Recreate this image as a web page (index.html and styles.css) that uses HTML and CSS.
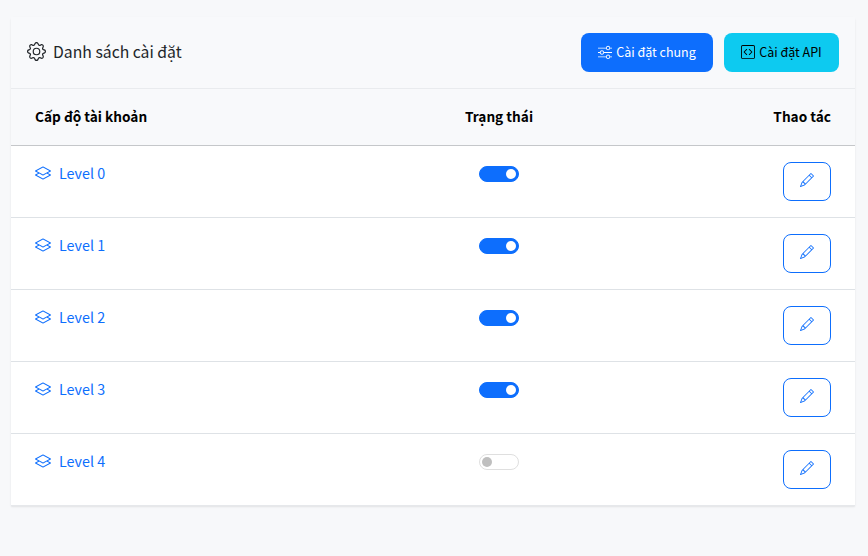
FILE: index.html
```html
<!DOCTYPE html>
<html lang="vi">
<head>
<meta charset="utf-8">
<title>Danh sách cài đặt</title>
<link rel="stylesheet" href="styles.css">
</head>
<body>
<svg class="defs" width="0" height="0" aria-hidden="true">
  <symbol id="i-layers" viewBox="0 0 16 16"><path d="M8.235 1.559a.5.5 0 0 0-.47 0l-7.5 4a.5.5 0 0 0 0 .882L3.188 8 .264 9.559a.5.5 0 0 0 0 .882l7.5 4a.5.5 0 0 0 .47 0l7.5-4a.5.5 0 0 0 0-.882L12.813 8l2.922-1.559a.5.5 0 0 0 0-.882zm3.515 7.008L14.438 10 8 13.433 1.562 10 4.25 8.567l3.515 1.874a.5.5 0 0 0 .47 0zM8 9.433 1.562 6 8 2.567 14.438 6z"/></symbol>
  <symbol id="i-pencil" viewBox="0 0 16 16"><path d="M12.146.146a.5.5 0 0 1 .708 0l3 3a.5.5 0 0 1 0 .708l-10 10a.5.5 0 0 1-.168.11l-5 2a.5.5 0 0 1-.65-.65l2-5a.5.5 0 0 1 .11-.168zM11.207 2.5 13.5 4.793 14.793 3.5 12.5 1.207zm1.586 3L10.5 3.207 4 9.707V10h.5a.5.5 0 0 1 .5.5v.5h.5a.5.5 0 0 1 .5.5v.5h.293zm-9.761 5.175-.106.106-1.528 3.821 3.821-1.528.106-.106A.5.5 0 0 1 5 12.5V12h-.5a.5.5 0 0 1-.5-.5V11h-.5a.5.5 0 0 1-.468-.325"/></symbol>
</svg>
<main class="card">
  <header class="card-head">
    <h1 class="title">
      <svg class="icon-gear" viewBox="0 0 16 16"><path d="M8 4.754a3.246 3.246 0 1 0 0 6.492 3.246 3.246 0 0 0 0-6.492M5.754 8a2.246 2.246 0 1 1 4.492 0 2.246 2.246 0 0 1-4.492 0"/><path d="M9.796 1.343c-.527-1.79-3.065-1.79-3.592 0l-.094.319a.873.873 0 0 1-1.255.52l-.292-.16c-1.64-.892-3.433.902-2.54 2.541l.159.292a.873.873 0 0 1-.52 1.255l-.319.094c-1.79.527-1.79 3.065 0 3.592l.319.094a.873.873 0 0 1 .52 1.255l-.16.292c-.892 1.64.901 3.434 2.541 2.54l.292-.159a.873.873 0 0 1 1.255.52l.094.319c.527 1.79 3.065 1.79 3.592 0l.094-.319a.873.873 0 0 1 1.255-.52l.292.16c1.64.893 3.434-.902 2.54-2.541l-.159-.292a.873.873 0 0 1 .52-1.255l.319-.094c1.79-.527 1.79-3.065 0-3.592l-.319-.094a.873.873 0 0 1-.52-1.255l.16-.292c.893-1.64-.902-3.433-2.541-2.54l-.292.159a.873.873 0 0 1-1.255-.52zm-2.633.283c.246-.835 1.428-.835 1.674 0l.094.319a1.873 1.873 0 0 0 2.693 1.115l.291-.16c.764-.415 1.6.42 1.184 1.185l-.159.292a1.873 1.873 0 0 0 1.116 2.692l.318.094c.835.246.835 1.428 0 1.674l-.319.094a1.873 1.873 0 0 0-1.115 2.693l.16.291c.415.764-.42 1.6-1.185 1.184l-.291-.159a1.873 1.873 0 0 0-2.693 1.116l-.094.318c-.246.835-1.428.835-1.674 0l-.094-.319a1.873 1.873 0 0 0-2.692-1.115l-.292.16c-.764.415-1.6-.42-1.184-1.185l.159-.291A1.873 1.873 0 0 0 1.945 8.93l-.319-.094c-.835-.246-.835-1.428 0-1.674l.319-.094A1.873 1.873 0 0 0 3.06 4.377l-.16-.292c-.415-.764.42-1.6 1.185-1.184l.292.159a1.873 1.873 0 0 0 2.692-1.115z"/></svg>
      <span>Danh sách cài đặt</span>
    </h1>
    <div class="actions">
      <a class="btn btn-primary" href="#">
        <svg class="btn-icon" viewBox="0 0 16 16"><path fill-rule="evenodd" d="M11.5 2a1.5 1.5 0 1 0 0 3 1.5 1.5 0 0 0 0-3M9.05 3a2.5 2.5 0 0 1 4.9 0H16v1h-2.05a2.5 2.5 0 0 1-4.9 0H0V3zM4.5 7a1.5 1.5 0 1 0 0 3 1.5 1.5 0 0 0 0-3M2.05 8a2.5 2.5 0 0 1 4.9 0H16v1H6.95a2.5 2.5 0 0 1-4.9 0H0V8zm9.45 4a1.5 1.5 0 1 0 0 3 1.5 1.5 0 0 0 0-3m-2.45 1a2.5 2.5 0 0 1 4.9 0H16v1h-2.05a2.5 2.5 0 0 1-4.9 0H0v-1z"/></svg>
        Cài đặt chung
      </a>
      <a class="btn btn-info" href="#">
        <svg class="btn-icon" viewBox="0 0 16 16"><path d="M14 1a1 1 0 0 1 1 1v12a1 1 0 0 1-1 1H2a1 1 0 0 1-1-1V2a1 1 0 0 1 1-1zM2 0a2 2 0 0 0-2 2v12a2 2 0 0 0 2 2h12a2 2 0 0 0 2-2V2a2 2 0 0 0-2-2z"/><path d="M6.854 4.646a.5.5 0 0 1 0 .708L4.207 8l2.647 2.646a.5.5 0 0 1-.708.708l-3-3a.5.5 0 0 1 0-.708l3-3a.5.5 0 0 1 .708 0m2.292 0a.5.5 0 0 0 0 .708L11.793 8l-2.647 2.646a.5.5 0 0 0 .708.708l3-3a.5.5 0 0 0 0-.708l-3-3a.5.5 0 0 0-.708 0"/></svg>
        Cài đặt API
      </a>
    </div>
  </header>
  <div class="table">
    <div class="row row-head">
      <div class="col-name">Cấp độ tài khoản</div>
      <div class="col-status">Trạng thái</div>
      <div class="col-action">Thao tác</div>
    </div>
    <div class="row">
      <a class="col-name level" href="#"><svg class="icon-layers"><use href="#i-layers"/></svg>Level 0</a>
      <div class="col-status"><span class="switch on"></span></div>
      <div class="col-action"><a class="edit" href="#"><svg class="icon-pencil"><use href="#i-pencil"/></svg></a></div>
    </div>
    <div class="row">
      <a class="col-name level" href="#"><svg class="icon-layers"><use href="#i-layers"/></svg>Level 1</a>
      <div class="col-status"><span class="switch on"></span></div>
      <div class="col-action"><a class="edit" href="#"><svg class="icon-pencil"><use href="#i-pencil"/></svg></a></div>
    </div>
    <div class="row">
      <a class="col-name level" href="#"><svg class="icon-layers"><use href="#i-layers"/></svg>Level 2</a>
      <div class="col-status"><span class="switch on"></span></div>
      <div class="col-action"><a class="edit" href="#"><svg class="icon-pencil"><use href="#i-pencil"/></svg></a></div>
    </div>
    <div class="row">
      <a class="col-name level" href="#"><svg class="icon-layers"><use href="#i-layers"/></svg>Level 3</a>
      <div class="col-status"><span class="switch on"></span></div>
      <div class="col-action"><a class="edit" href="#"><svg class="icon-pencil"><use href="#i-pencil"/></svg></a></div>
    </div>
    <div class="row">
      <a class="col-name level" href="#"><svg class="icon-layers"><use href="#i-layers"/></svg>Level 4</a>
      <div class="col-status"><span class="switch"></span></div>
      <div class="col-action"><a class="edit" href="#"><svg class="icon-pencil"><use href="#i-pencil"/></svg></a></div>
    </div>
  </div>
</main>
</body>
</html>
```
FILE: styles.css
```css
* { box-sizing: border-box; }
html, body { margin: 0; height: 100%; }
body {
  background: #f7f8fa;
  padding: 17px 13px 0 11px;
  font-family: "Noto Sans CJK SC", "Noto Sans", sans-serif;
  color: #212529;
  overflow: hidden;
}
a { text-decoration: none; }
.defs { position: absolute; }
.card {
  background: #fff;
  box-shadow: 0 1px 2px rgba(0, 0, 0, .09);
  border-radius: 3px 3px 0 0;
}
.card-head {
  height: 72px;
  padding: 15px 16px 17px 16px;
  display: flex;
  align-items: center;
  justify-content: space-between;
  background: #f8f9fb;
  border-bottom: 1px solid #e9ebee;
}
.title {
  margin: 0;
  display: flex;
  align-items: center;
  gap: 7px;
  font-size: 15.75px;
  font-weight: 400;
  line-height: 24px;
}
.icon-gear { width: 19px; height: 19px; fill: #212529; }
.actions { display: flex; gap: 11px; margin-top: 2px; }
.btn {
  height: 39px;
  padding-bottom: 2px;
  display: flex;
  align-items: center;
  justify-content: center;
  gap: 4px;
  border-radius: 8px;
  font-size: 12.5px;
  line-height: 19px;
}
.btn-icon { width: 14px; height: 14px; fill: currentColor; }
.btn-primary { width: 132px; background: #0d6efd; color: #fff; }
.btn-info { width: 115px; background: #0dcaf0; color: #000; }
.row {
  display: grid;
  grid-template-columns: 376px 176px 1fr;
  height: 72px;
  padding: 16px 24px;
  border-bottom: 1px solid #dee2e6;
}
.row:last-child { border-bottom: 1px solid #e6e8eb; }
.row-head {
  height: 57px;
  align-items: center;
  padding: 0 24px 2px;
  background: #f8f9fb;
  border-bottom: 1px solid #c5c7ca;
  font-size: 13.65px;
  font-weight: 700;
  color: #000;
}
.col-status { display: flex; justify-content: center; }
.col-action { display: flex; justify-content: flex-end; }
.level {
  display: flex;
  align-items: flex-start;
  gap: 8px;
  color: #0d6efd;
  font-size: 14.3px;
  line-height: 22px;
}
.icon-layers { width: 16px; height: 16px; margin-top: 3px; fill: #0d6efd; }
.switch {
  position: relative;
  display: block;
  width: 40px;
  height: 16px;
  margin-top: 4px;
  border-radius: 8px;
  background: #fff;
  border: 1px solid #dfdfdf;
}
.switch::after {
  content: "";
  position: absolute;
  top: 2px;
  left: 2px;
  width: 10px;
  height: 10px;
  border-radius: 50%;
  background: #bfbfbf;
}
.switch.on { background: #0d6efd; border-color: #0d6efd; }
.switch.on::after { left: auto; right: 2px; background: #fff; }
.edit {
  width: 48px;
  height: 39px;
  padding-bottom: 3px;
  display: flex;
  align-items: center;
  justify-content: center;
  border: 1px solid #0d6efd;
  border-radius: 8px;
}
.icon-pencil { width: 14px; height: 14px; fill: #0d6efd; }
```
